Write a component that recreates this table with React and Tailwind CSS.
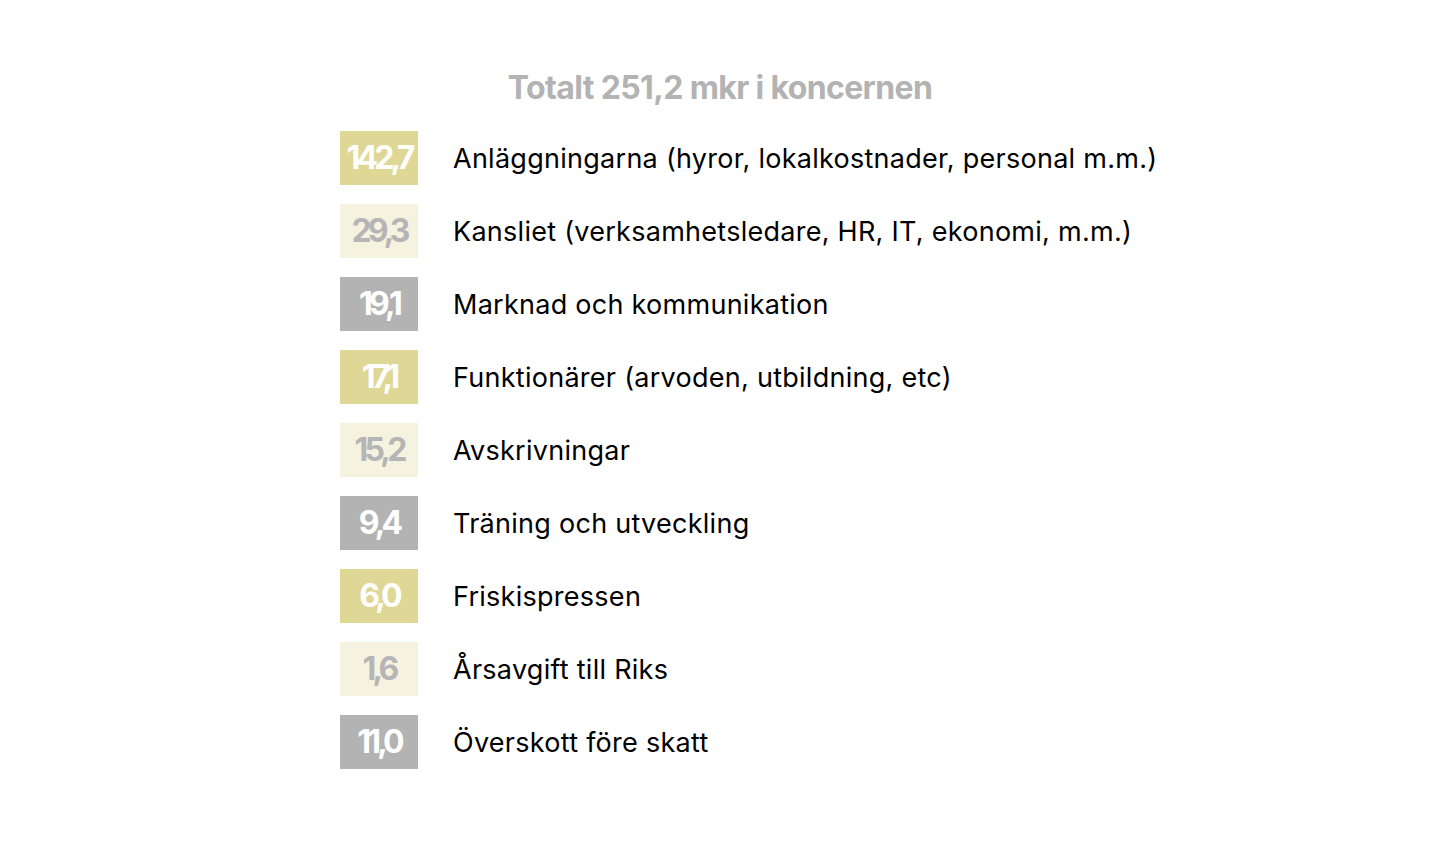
import React from 'react';

// Kostnadsposter i koncernen
const rows = [
  { value: '142,7', label: 'Anläggningarna (hyror, lokalkostnader, personal m.m.)', tone: 'gold' },
  { value: '29,3', label: 'Kansliet (verksamhetsledare, HR, IT, ekonomi, m.m.)', tone: 'cream' },
  { value: '19,1', label: 'Marknad och kommunikation', tone: 'gray' },
  { value: '17,1', label: 'Funktionärer (arvoden, utbildning, etc)', tone: 'gold' },
  { value: '15,2', label: 'Avskrivningar', tone: 'cream' },
  { value: '9,4', label: 'Träning och utveckling', tone: 'gray' },
  { value: '6,0', label: 'Friskispressen', tone: 'gold' },
  { value: '1,6', label: 'Årsavgift till Riks', tone: 'cream' },
  { value: '11,0', label: 'Överskott före skatt', tone: 'gray' },
];

const toneClasses = {
  gold: 'bg-[#ded796] text-white',
  cream: 'bg-[#f5f2e0] text-[#b5b5b5]',
  gray: 'bg-[#b3b3b3] text-white',
};

const Row = ({ value, label, tone }) => (
  <div className="flex items-center h-[54px]">
    <div
      className={`w-[78px] h-[54px] flex items-center justify-center font-bold text-[32px] tracking-[-0.12em] ${toneClasses[tone]}`}
    >
      {value}
    </div>
    <div className="ml-[35px] text-[27px] text-black tracking-[0.01em] leading-none">{label}</div>
  </div>
);

export default function App() {
  return (
    <div
      className="w-[1440px] h-[844px] bg-white"
      style={{ fontFamily: 'Inter, "Noto Sans", sans-serif' }}
    >
      <div className="pt-[72px] text-center text-[32px] font-bold text-[#b3b3b3] tracking-[-0.02em] leading-none">
        Totalt 251,2 mkr i koncernen
      </div>
      <div className="mt-[27px] ml-[340px] flex flex-col gap-[19px]">
        {rows.map((r) => (
          <Row key={r.value + r.label} {...r} />
        ))}
      </div>
    </div>
  );
}
